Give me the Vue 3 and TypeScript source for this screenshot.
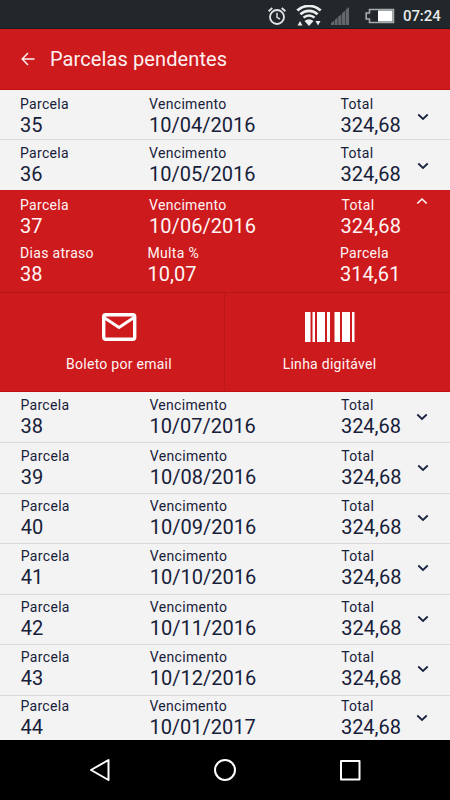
<script setup lang="ts">
interface Installment {
  number: number
  due: string
  total: string
  height: number
  top: number
  left: number
  last?: boolean
}

const overdue: Installment[] = [
  { number: 35, due: '10/04/2016', total: '324,68', height: 50, top: 5, left: 0 },
  { number: 36, due: '10/05/2016', total: '324,68', height: 50, top: 4, left: 0, last: true },
]

const upcoming: Installment[] = [
  { number: 38, due: '10/07/2016', total: '324,68', height: 51, top: 4, left: 0.4 },
  { number: 39, due: '10/08/2016', total: '324,68', height: 51, top: 4, left: 0.8 },
  { number: 40, due: '10/09/2016', total: '324,68', height: 50, top: 3, left: 0.8 },
  { number: 41, due: '10/10/2016', total: '324,68', height: 51, top: 3, left: 0.8 },
  { number: 42, due: '10/11/2016', total: '324,68', height: 50, top: 3, left: 0.8 },
  { number: 43, due: '10/12/2016', total: '324,68', height: 51, top: 3, left: 0.8 },
  { number: 44, due: '10/01/2017', total: '324,68', height: 44, top: 1, left: 0.4, last: true },
]

const groups = { overdue, upcoming }
</script>

<template>
  <div class="screen">
    <div class="status">
      <svg class="alarm" width="20" height="20" viewBox="0 0 20 20" fill="none" stroke="#e4e6e6">
        <circle cx="10" cy="11" r="7" stroke-width="1.8" />
        <path d="M10 6.8v4.5l3 1.8" stroke-width="1.4" />
        <path d="M1.6 5.2 5.3 2M18.4 5.2 14.7 2" stroke-width="1.8" />
      </svg>
      <svg class="wifi" width="26" height="22" viewBox="0 0 26 22" fill="none" stroke="#eceeee">
        <path d="M1.3 5.6a17 17 0 0 1 23.4 0" stroke-width="2.8" />
        <path d="M4.4 9.3a12.5 12.5 0 0 1 17.2 0" stroke-width="2.6" />
        <path d="M7.5 12.7a8 8 0 0 1 11 0" stroke-width="2.4" />
        <path d="M8.500 16q4.500-3.500 9 0L13 21z" fill="#eceeee" stroke="none" />
        <path d="M1.500 20.500 4 16l2.500 4.500zM19.500 16h5L22 20.500z" fill="#eceeee" stroke="none" />
      </svg>
      <svg class="signal" width="20" height="20" viewBox="0 0 20 20" fill="#63686a">
        <path d="M1 19v-2l3-2.200V19zM4.600 19v-5l3-2.500V19zM8.200 19v-8.300l3.200-2.500V19zM12 19V7.200l3-2.500V19zM15.600 19V3.800L19 1v18z" />
      </svg>
      <svg class="battery" width="30" height="16" viewBox="0 0 30 16">
        <path d="M4.500 1.500H28.500V14.500H4.500V11H1.200V5H4.500z" fill="none" stroke="#a8acac" stroke-width="1.600" />
        <path d="M13 2.500h14.500v11H13z" fill="#fff" />
      </svg>
      <span class="clock">07:24</span>
    </div>

    <header class="appbar">
      <svg width="14" height="14" viewBox="0 0 14 14" fill="none" stroke="#fff0f0" stroke-width="1.500">
        <path d="M13.500 7H1.500M7 1 1.200 7 7 13" />
      </svg>
      <h1>Parcelas pendentes</h1>
    </header>

    <main>
      <template v-for="(items, name) in groups" :key="name">
        <section class="list" :class="name">
          <div
            v-for="item in items"
            :key="item.number"
            class="row"
            :class="{ last: item.last }"
            :style="{ height: item.height + 'px', paddingTop: item.top + 'px', paddingLeft: 20 + item.left + 'px' }"
          >
            <div class="cell"><span class="label">Parcela</span><span class="value">{{ item.number }}</span></div>
            <div class="cell"><span class="label">Vencimento</span><span class="value">{{ item.due }}</span></div>
            <div class="cell"><span class="label">Total</span><span class="value">{{ item.total }}</span></div>
            <svg class="chevron" width="12" height="8" viewBox="0 0 12 8" fill="none" stroke="#19233f" stroke-width="1.800">
              <path d="M1.300 1.500 6 5.900l4.700-4.400" />
            </svg>
          </div>
        </section>

        <section v-if="name === 'overdue'" class="selected">
          <div class="details">
            <div class="row open">
              <div class="cell"><span class="label">Parcela</span><span class="value">37</span></div>
              <div class="cell"><span class="label">Vencimento</span><span class="value">10/06/2016</span></div>
              <div class="cell"><span class="label indent">Total</span><span class="value">324,68</span></div>
              <svg class="chevron" width="12" height="8" viewBox="0 0 12 8" fill="none" stroke="#fff" stroke-width="1.600">
                <path d="M1.300 6.500 6 2l4.700 4.500" />
              </svg>
            </div>
            <div class="row extra">
              <div class="cell"><span class="label">Dias atraso</span><span class="value">38</span></div>
              <div class="cell"><span class="label">Multa %</span><span class="value">10,07</span></div>
              <div class="cell"><span class="label">Parcela</span><span class="value">314,61</span></div>
            </div>
          </div>
          <div class="actions">
            <button class="action">
              <svg width="36" height="32" viewBox="0 0 36 32" fill="none" stroke="#fff" stroke-width="3.400">
                <rect x="2.700" y="3.700" width="31" height="24.600" rx="2" />
                <path d="M3 6.500 18 16.500 33 6.500" stroke-width="3" />
              </svg>
              <span>Boleto por email</span>
            </button>
            <button class="action">
              <svg width="50" height="32" viewBox="0 0 50 32" fill="#fff">
                <path d="M0 1h5.500v30H0zM7.500 1h2.500v30H7.500zM12 1h8v30h-8zM22 1h3v30h-3zM29.500 1h5.500v30h-5.500zM37 1h8v30h-8zM47 1h2.500v30H47z" />
              </svg>
              <span>Linha digitável</span>
            </button>
          </div>
        </section>
      </template>
    </main>

    <nav class="navbar">
      <svg width="24" height="26" viewBox="0 0 24 26"><path d="M3 13 20.500 3v20z" /></svg>
      <svg width="24" height="26" viewBox="0 0 24 26"><circle cx="12" cy="13" r="10" /></svg>
      <svg width="24" height="26" viewBox="0 0 24 26"><rect x="3" y="4" width="18.500" height="18.500" /></svg>
    </nav>
  </div>
</template>

<style>
body {
  margin: 0;
  background: #000;
}
</style>

<style scoped>
.screen {
  width: 450px;
  height: 800px;
  display: flex;
  flex-direction: column;
  overflow: hidden;
  background: #f3f3f3;
  font-family: Roboto, "Liberation Sans", sans-serif;
}
.screen * {
  box-sizing: border-box;
}
svg {
  display: block;
  flex: none;
}
.status {
  height: 29px;
  flex: none;
  display: flex;
  align-items: center;
  justify-content: flex-end;
  padding: 3px 9px 0 0;
  background: #21272b;
  border-bottom: 1px solid #1b1c20;
}
.alarm { margin-right: 9px; }
.wifi { margin-right: 8px; }
.signal { margin-right: 15px; }
.battery { margin-right: 8px; }
.clock {
  color: #e8eaea;
  font-size: 15px;
  line-height: 20px;
  font-weight: 500;
  width: 38px;
  letter-spacing: -0.1px;
  white-space: nowrap;
}
.appbar {
  height: 61px;
  flex: none;
  display: flex;
  align-items: center;
  gap: 15px;
  padding: 0 21px;
  background: #cd1a1d;
  border-bottom: 1px solid #c80d11;
}
h1 {
  margin: 0;
  color: #fff0f0;
  font-size: 20px;
  line-height: 24px;
  font-weight: 400;
  letter-spacing: 0.1px;
}
main {
  flex: 1;
}
.row {
  display: grid;
  grid-template-columns: 129px 191.500px 76px 12px;
  align-items: start;
  padding: 0 0 0 20px;
  border-bottom: 1px solid #dadadb;
  color: #172039;
}
.row.last {
  border-bottom: 0;
}
.cell {
  display: flex;
  flex-direction: column;
  white-space: nowrap;
}
.label {
  font-size: 14px;
  line-height: 18px;
  letter-spacing: 0.32px;
}
.value {
  font-size: 20px;
  line-height: 24px;
}
.chevron {
  margin-top: 18px;
}
.upcoming .chevron {
  margin-top: 17px;
  margin-left: -0.5px;
}
.selected {
  height: 202px;
  background: #cd1a1d;
  border-bottom: 1px solid #c01013;
}
.details {
  height: 103px;
  border-bottom: 1px solid #b51619;
}
.row.open,
.row.extra {
  border: 0;
  color: #fff5f5;
}
.row.open {
  height: 54px;
  padding-top: 6px;
}
.row.open .chevron {
  margin-top: 1px;
  margin-left: -1px;
}
.row.open .value,
.row.extra .value {
  letter-spacing: 0.05px;
}
.row.extra {
  grid-template-columns: 127.500px 192.500px 77px;
}
.indent {
  padding-left: 1px;
}
.actions {
  height: 98px;
  display: grid;
  grid-template-columns: 224px 226px;
}
.action {
  display: flex;
  flex-direction: column;
  align-items: center;
  gap: 11px;
  margin: 0;
  padding: 18px 0 0 14px;
  border: 0;
  background: none;
  color: #fff5f5;
  font: 400 14px/20px Roboto, "Liberation Sans", sans-serif;
  letter-spacing: 0.27px;
}
.action + .action {
  padding-left: 0;
  padding-right: 16px;
  border-left: 1px solid #bd171a;
}
.navbar {
  height: 60px;
  flex: none;
  display: flex;
  align-items: center;
  justify-content: space-between;
  padding: 0 88px;
  background: #000;
}
.navbar svg {
  fill: none;
  stroke: #fff;
  stroke-width: 2;
  stroke-linejoin: round;
}
</style>
